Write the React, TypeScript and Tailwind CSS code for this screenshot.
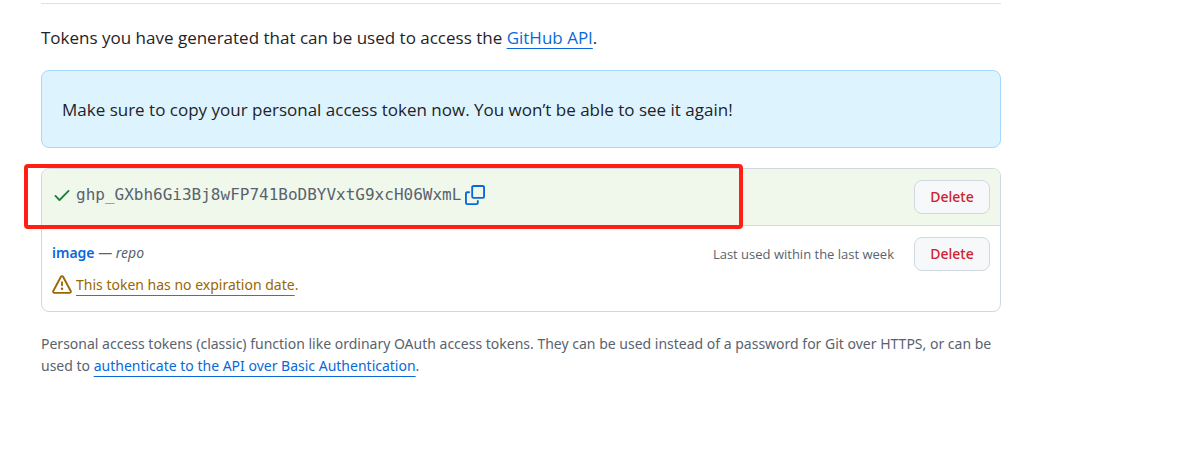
import type { ReactNode } from "react";

function Octicon({ className, children }: { className: string; children: ReactNode }) {
  return (
    <svg viewBox="0 0 16 16" aria-hidden="true" className={`size-5 shrink-0 fill-current ${className}`}>
      {children}
    </svg>
  );
}

function CheckIcon() {
  return (
    <Octicon className="text-[#1a7f37]">
      <path d="M13.78 4.22a.75.75 0 0 1 0 1.06l-7.25 7.25a.75.75 0 0 1-1.06 0L2.22 9.28a.751.751 0 0 1 .018-1.042.751.751 0 0 1 1.042-.018L6 10.94l6.72-6.72a.75.75 0 0 1 1.06 0Z" />
    </Octicon>
  );
}

function CopyIcon() {
  return (
    <Octicon className="text-[#0969da]">
      <path d="M0 6.75C0 5.784.784 5 1.75 5h1.5a.75.75 0 0 1 0 1.5h-1.5a.25.25 0 0 0-.25.25v7.5c0 .138.112.25.25.25h7.5a.25.25 0 0 0 .25-.25v-1.5a.75.75 0 0 1 1.5 0v1.5A1.75 1.75 0 0 1 9.25 16h-7.5A1.75 1.75 0 0 1 0 14.25Z" />
      <path d="M5 1.75C5 .784 5.784 0 6.75 0h7.5C15.216 0 16 .784 16 1.75v7.5A1.75 1.75 0 0 1 14.25 11h-7.5A1.75 1.75 0 0 1 5 9.25Zm1.75-.25a.25.25 0 0 0-.25.25v7.5c0 .138.112.25.25.25h7.5a.25.25 0 0 0 .25-.25v-7.5a.25.25 0 0 0-.25-.25Z" />
    </Octicon>
  );
}

function AlertIcon() {
  return (
    <Octicon className="text-[#9a6700]">
      <path d="M6.457 1.047c.659-1.234 2.427-1.234 3.086 0l6.082 11.378A1.75 1.75 0 0 1 14.082 15H1.918a1.75 1.75 0 0 1-1.543-2.575Zm1.763.707a.25.25 0 0 0-.44 0L1.698 13.132a.25.25 0 0 0 .22.368h12.164a.25.25 0 0 0 .22-.368Zm.53 3.996v2.5a.75.75 0 0 1-1.5 0v-2.5a.75.75 0 0 1 1.5 0ZM9 11a1 1 0 1 1-2 0 1 1 0 0 1 2 0Z" />
    </Octicon>
  );
}

function DeleteButton() {
  return (
    <button
      type="button"
      className="h-[34px] min-w-[76px] shrink-0 rounded-lg border border-[#d1d9e0] bg-[#f6f8fa] px-3 text-sm leading-5 font-medium text-[#cf222e]"
    >
      Delete
    </button>
  );
}

export default function App() {
  return (
    <main className="min-h-screen bg-white pt-[3px] pr-6 pl-[41px] font-['Noto_Sans',sans-serif] text-[#1f2328]">
      <div className="max-w-[960px]">
        <hr className="border-t border-[#dfe1e4]" />
        <p className="pt-[21px] pb-[19px] font-['Open_Sans',sans-serif] text-[17px] leading-[26px]">
          Tokens you have generated that can be used to access the{" "}
          <a href="#api" className="text-[#0969da] underline decoration-1 underline-offset-4">GitHub API</a>.
        </p>

        <div className="rounded-lg border border-[#a5d8ff] bg-[#ddf4ff] px-5 pt-[26px] pb-6 font-['Open_Sans',sans-serif] text-[17px] leading-[26px]">
          Make sure to copy your personal access token now. You won’t be able to see it again!
        </div>

        <ul className="mt-5 rounded-lg border border-[#d1d9e0]">
          <li className="relative flex items-start justify-between rounded-t-lg border-b border-[#d1d9e0] bg-[#f0f8ec] px-[10px] py-[11px]">
            <div className="flex items-center pt-[5px]">
              <CheckIcon />
              <code className="ml-1 font-['DejaVu_Sans_Mono',monospace] text-base leading-5 text-[#59636e]">
                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
              </code>
              <button type="button" aria-label="Copy token" className="ml-1">
                <CopyIcon />
              </button>
            </div>
            <DeleteButton />
            <div className="pointer-events-none absolute -top-[5px] -bottom-1 -left-[18px] w-[719px] rounded border-4 border-[#ff1f14]" />
          </li>
          <li className="flex items-start justify-between px-[10px] pt-[11px] pb-[15px] text-sm leading-[22px] text-[#59636e]">
            <div className="pt-[5px]">
              <div>
                <a href="#image" className="font-semibold text-[#0969da]">image</a> — <em>repo</em>
              </div>
              <div className="mt-[10px] flex items-center gap-1 text-[#9a6700]">
                <AlertIcon />
                <span>
                  <a href="#expiration" className="underline decoration-1 underline-offset-[5px]">This token has no expiration date</a>.
                </span>
              </div>
            </div>
            <div className="flex items-center gap-5">
              <span className="font-['Open_Sans',sans-serif] text-[13px]">Last used within the last week</span>
              <DeleteButton />
            </div>
          </li>
        </ul>

        <p className="mt-[21px] text-sm leading-[22px] text-[#59636e]">
          Personal access tokens (classic) function like ordinary OAuth access tokens. They can be used instead of a
          password for Git over HTTPS, or can be used to{" "}
          <a href="#basic-auth" className="text-[#0969da] underline decoration-1 underline-offset-[5px]">authenticate to the API over Basic Authentication</a>.
        </p>
      </div>
    </main>
  );
}
